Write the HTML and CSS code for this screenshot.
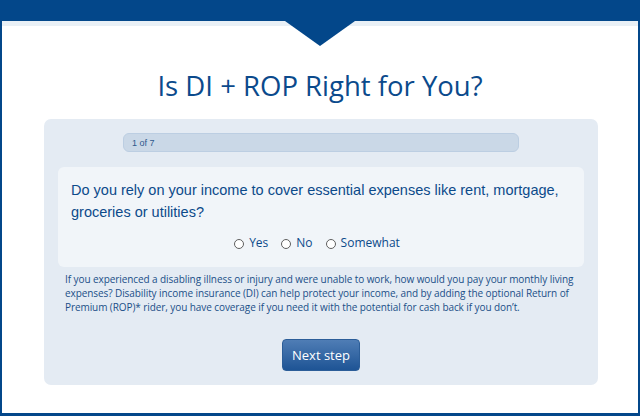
FILE: index.html
```html
<!DOCTYPE html>
<html lang="en">
<head>
<meta charset="utf-8">
<title>Is DI + ROP Right for You?</title>
<link rel="stylesheet" href="styles.css">
</head>
<body>
<div class="frame">
  <div class="topbar"></div>
  <div class="strip"></div>
  <div class="pointer"></div>
  <h1 class="title">Is DI + ROP Right for You?</h1>
  <section class="panel">
    <div class="progress"><span class="progress-text">1 of 7</span></div>
    <div class="card">
      <p class="question">Do you rely on your income to cover essential expenses like rent, mortgage, groceries or utilities?</p>
      <div class="options">
        <label class="option"><span class="radio"></span><span class="opt-label">Yes</span></label>
        <label class="option"><span class="radio"></span><span class="opt-label">No</span></label>
        <label class="option"><span class="radio"></span><span class="opt-label">Somewhat</span></label>
      </div>
    </div>
    <p class="info">If you experienced a disabling illness or injury and were unable to work, how would you pay your monthly living expenses? Disability income insurance (DI) can help protect your income, and by adding the optional Return of Premium (ROP)* rider, you have coverage if you need it with the potential for cash back if you don’t.</p>
    <div class="actions"><button class="next">Next step</button></div>
  </section>
</div>
</body>
</html>
```
FILE: styles.css
```css
html, body {
  margin: 0;
  padding: 0;
  background: #ffffff;
}
.frame {
  position: relative;
  width: 640px;
  height: 416px;
  box-sizing: border-box;
  border-left: 2px solid #03478a;
  border-right: 2px solid #03478a;
  border-bottom: 3px solid #03478a;
  display: flex;
  flex-direction: column;
  overflow: hidden;
  font-family: "Open Sans", "Liberation Sans", sans-serif;
}
.topbar {
  height: 21px;
  background: #03478a;
}
.strip {
  height: 5px;
  background: #e9f0f6;
}
.pointer {
  position: absolute;
  left: 283px;
  top: 21px;
  width: 0;
  height: 0;
  border-left: 35px solid transparent;
  border-right: 35px solid transparent;
  border-top: 25px solid #03478a;
}
.title {
  margin: 41px 0 0;
  font-size: 27.5px;
  line-height: 38px;
  font-weight: 400;
  color: #0b4a8c;
  text-align: center;
}
.panel {
  margin: 14px 40px 0 42px;
  padding: 14px 14px 14px;
  background: #e4ebf3;
  border-radius: 7px;
}
.progress {
  width: 396px;
  height: 19px;
  margin: 0 auto;
  box-sizing: border-box;
  background: #cad8e7;
  border: 1px solid #bccee2;
  border-radius: 6px;
  display: flex;
  align-items: center;
  padding-left: 8px;
}
.progress-text {
  font-family: "Liberation Sans", Arial, sans-serif;
  font-size: 9px;
  color: #2f5a8c;
}
.card {
  margin-top: 15px;
  padding: 12px 13px 16px;
  background: #f1f5f9;
  border-radius: 6px;
}
.question {
  margin: 0;
  font-family: "Liberation Sans", Arial, sans-serif;
  font-size: 14.5px;
  line-height: 22px;
  color: #0c4a8a;
}
.options {
  margin-top: 12px;
  display: flex;
  justify-content: center;
  gap: 13px;
  padding-right: 8px;
  font-size: 12px;
  line-height: 16px;
  color: #0c4a8a;
}
.option {
  display: flex;
  align-items: center;
  gap: 5px;
}
.radio {
  width: 10px;
  height: 10px;
  box-sizing: border-box;
  border: 1px solid #5f5f5f;
  border-radius: 50%;
  background: #ffffff;
  margin-top: 1px;
}
.info {
  margin: 5px 0 0 7px;
  font-size: 10px;
  line-height: 14px;
  letter-spacing: -0.08px;
  color: #1b4f88;
}
.actions {
  margin-top: 25px;
  display: flex;
  justify-content: center;
}
.next {
  width: 78px;
  height: 32px;
  padding: 0;
  border: 1px solid #2b5d98;
  border-radius: 4px;
  background: linear-gradient(#4f7db5, #1e5495);
  color: #ffffff;
  font-family: "Open Sans", sans-serif;
  font-size: 13px;
  cursor: pointer;
}
```
